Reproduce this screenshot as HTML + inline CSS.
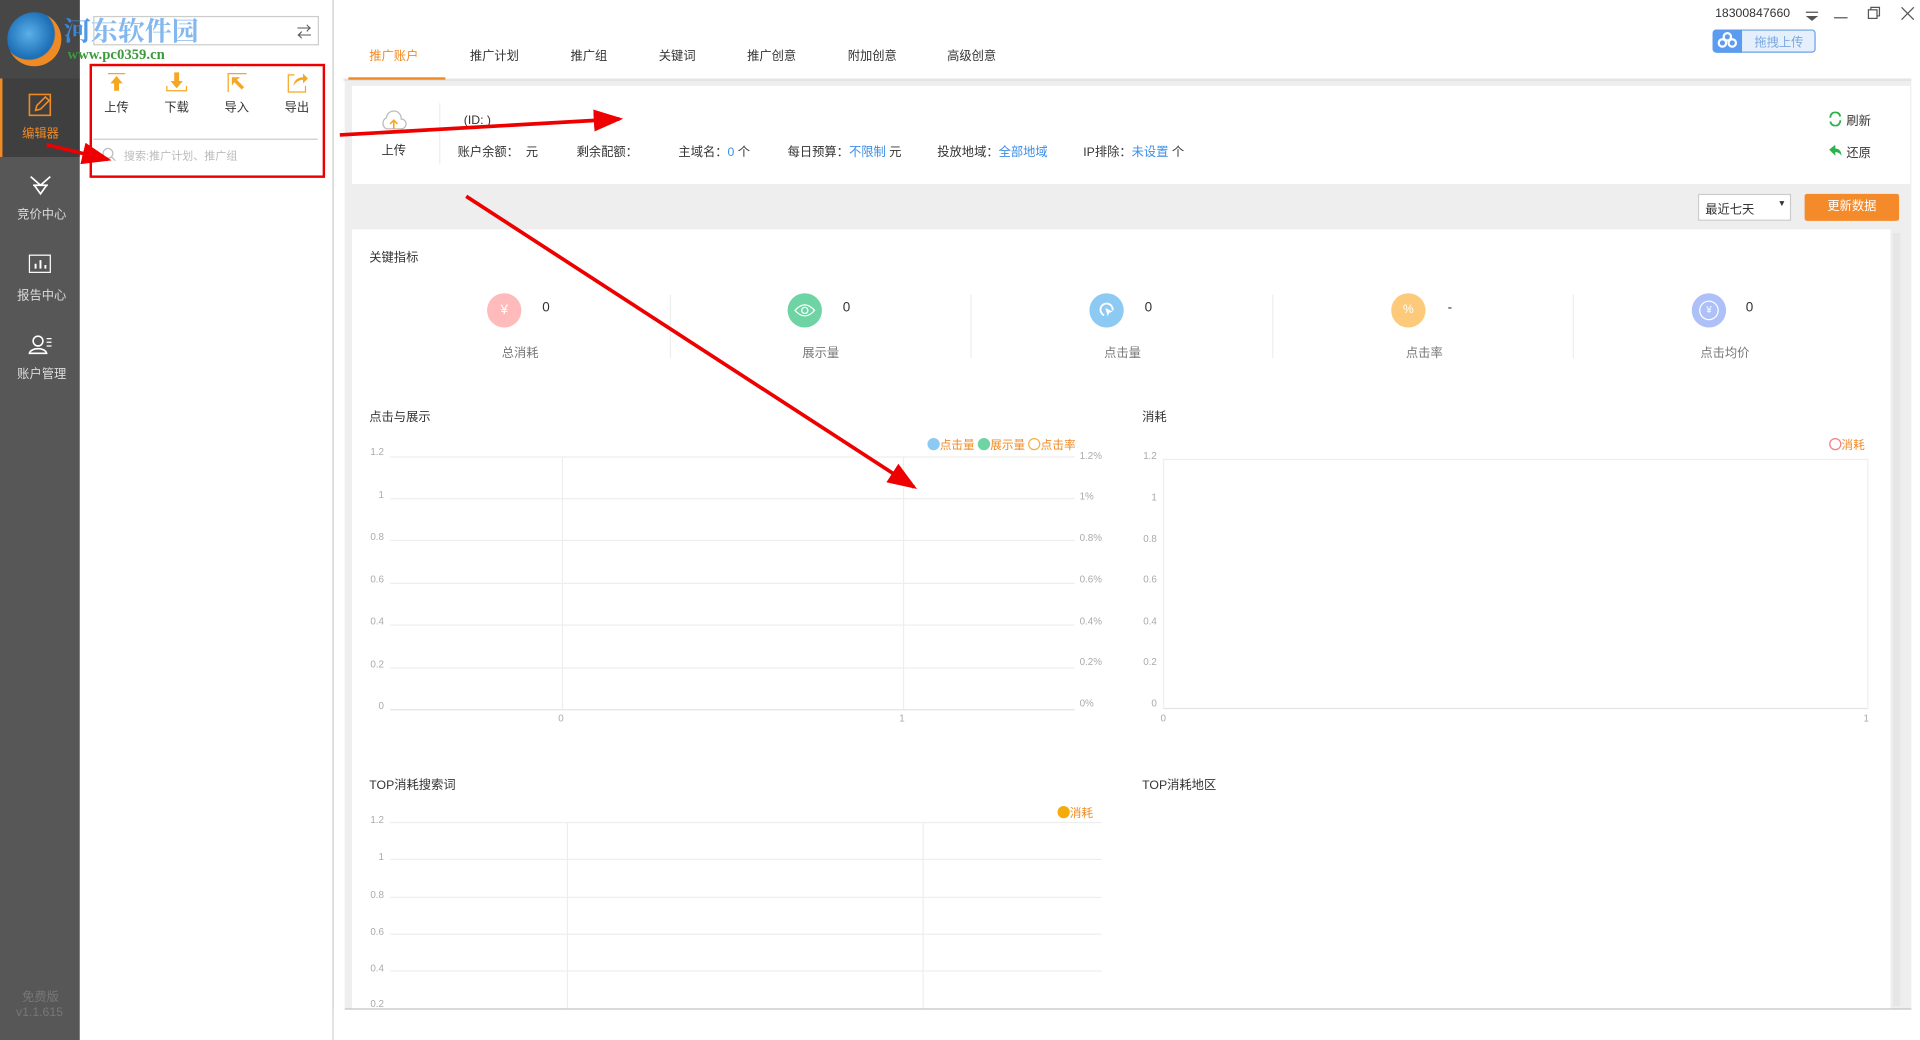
<!DOCTYPE html>
<html><head><meta charset="utf-8">
<style>
*{margin:0;padding:0;box-sizing:border-box}
html,body{width:1920px;height:1040px;overflow:hidden;background:#fff}
#w{position:absolute;left:0;top:0;width:1565px;height:848px;transform:scale(1.2268);transform-origin:0 0;font-family:"Liberation Sans","Noto Sans CJK SC",sans-serif;font-size:10px;color:#333}
.a{position:absolute;white-space:nowrap}
.g{color:#999}
.b{color:#3a8ee6}
.hl{position:absolute;height:1px;background:#eee}
.vl{position:absolute;width:1px;background:#eee}
.yl{position:absolute;font-size:8px;color:#aaa;text-align:right}
.pl{position:absolute;font-size:8px;color:#aaa;left:880px}
</style></head><body><div id="w">
<!-- sidebar -->
<div class="a" style="left:0;top:0;width:65px;height:848px;background:#575757"></div>
<div class="a" style="left:0;top:0;width:65px;height:64px;background:#474747"></div>
<div class="a" style="left:0;top:64px;width:65px;height:64px;background:#3f3f3f;border-left:2px solid #f08a24"></div>
<svg class="a" style="left:22px;top:75px" width="22" height="22" viewBox="0 0 22 22"><rect x="2" y="2" width="17" height="17" fill="none" stroke="#f08a24" stroke-width="1.3"/><path d="M7 15l1-4 7-7 3 3-7 7z" fill="none" stroke="#f08a24" stroke-width="1.3"/></svg>
<div class="a" style="left:18px;top:100px;color:#f08a24;font-size:10px">编辑器</div>
<svg class="a" style="left:23px;top:142px" width="20" height="18"><path d="M2 2l8 7 8-7M4 9h12M5 9l5 7 5-7" fill="none" stroke="#fff" stroke-width="1.4"/></svg>
<div class="a" style="left:14px;top:166px;color:#ddd">竞价中心</div>
<svg class="a" style="left:23px;top:207px" width="20" height="18"><rect x="1" y="1" width="17" height="14" fill="none" stroke="#fff"/><path d="M6 12V8M10 12V5M14 12V9" stroke="#fff" stroke-width="1.6"/></svg>
<div class="a" style="left:14px;top:232px;color:#ddd">报告中心</div>
<svg class="a" style="left:23px;top:272px" width="22" height="18"><circle cx="8" cy="6" r="4" fill="none" stroke="#fff" stroke-width="1.3"/><path d="M1 16c1-5 13-5 14 0z" fill="none" stroke="#fff" stroke-width="1.3"/><path d="M15 4h4M15 7h4M15 10h4" stroke="#fff"/></svg>
<div class="a" style="left:14px;top:296px;color:#ddd">账户管理</div>
<div class="a" style="left:18px;top:804px;color:#777">免费版</div>
<div class="a" style="left:13px;top:820px;color:#777">v1.1.615</div>
<!-- watermark logo -->
<div class="a" style="left:6px;top:10px;width:44px;height:44px;border-radius:50%;background:radial-gradient(circle at 40% 40%,#5ab0e8,#1a6cb4 55%,#f08a24 58%)"></div>
<div class="a" style="left:52px;top:9px;font-size:22px;font-weight:bold;color:#3a8ee6;font-family:'Liberation Serif','Noto Serif CJK SC',serif;opacity:.9">河东软件园</div>
<div class="a" style="left:55px;top:37px;font-size:12px;font-weight:bold;color:#3c9a3c;font-family:'Liberation Serif',serif">www.pc0359.cn</div>
<!-- left panel -->
<div class="a" style="left:271px;top:0;width:1px;height:848px;background:#ccc"></div>
<div class="a" style="left:76px;top:13px;width:184px;height:24px;border:1px solid #ccc;background:rgba(255,255,255,.3)"></div>
<div class="a" style="left:242px;top:17px;font-size:12px;color:#555">⇄</div>
<svg class="a" style="left:86px;top:58px" width="18" height="18"><path d="M2 2h14" stroke="#f5a623"/><path d="M9 4l-5 6h3v6h4v-6h3z" fill="#f5a623"/></svg>
<svg class="a" style="left:135px;top:58px" width="18" height="18"><path d="M7 1h4v7h3l-5 6-5-6h3z" fill="#f5a623"/><path d="M1 12v4h16v-4" fill="none" stroke="#f5a623"/></svg>
<svg class="a" style="left:184px;top:58px" width="18" height="18"><path d="M2 17V2h15" fill="none" stroke="#f5a623"/><path d="M5 5h7l-3 2 6 6-2 2-6-6-2 3z" fill="#f5a623"/></svg>
<svg class="a" style="left:233px;top:58px" width="18" height="18"><path d="M7 3H2v14h14v-5" fill="none" stroke="#f5a623"/><path d="M6 12c1-5 4-7 8-7V2l4 4-4 4V7c-3 0-6 2-8 5z" fill="#f5a623"/></svg>
<div class="a" style="left:85px;top:79px">上传</div>
<div class="a" style="left:134px;top:79px">下载</div>
<div class="a" style="left:183px;top:79px">导入</div>
<div class="a" style="left:232px;top:79px">导出</div>
<div class="a" style="left:76px;top:113px;width:183px;height:1px;background:#ccc"></div>
<svg class="a" style="left:83px;top:120px" width="12" height="12"><circle cx="5" cy="5" r="4" fill="none" stroke="#bbb"/><path d="M8 8l3 3" stroke="#bbb"/></svg>
<div class="a g" style="left:101px;top:120px;font-size:9px;color:#bbb">搜索:推广计划、推广组</div>
<div class="a" style="left:73px;top:52px;width:192px;height:93px;border:2px solid #e00"></div>
<!-- tabs -->
<div class="a" style="left:301px;top:37px;color:#f08a24">推广账户</div>
<div class="a" style="left:383px;top:37px">推广计划</div>
<div class="a" style="left:465px;top:37px">推广组</div>
<div class="a" style="left:537px;top:37px">关键词</div>
<div class="a" style="left:609px;top:37px">推广创意</div>
<div class="a" style="left:691px;top:37px">附加创意</div>
<div class="a" style="left:772px;top:37px">高级创意</div>
<div class="a" style="left:280px;top:64px;width:1278px;height:2px;background:#e4e4e4"></div>
<div class="a" style="left:284px;top:63px;width:79px;height:2px;background:#f08a24"></div>
<!-- top right -->
<div class="a" style="left:1398px;top:6px;font-size:10px">18300847660</div>
<svg class="a" style="left:1471px;top:9px" width="12" height="10"><path d="M1 1h10" stroke="#555"/><path d="M1 4h10l-5 4z" fill="#555"/></svg>
<div class="a" style="left:1495px;top:14px;width:11px;height:1px;background:#555"></div>
<svg class="a" style="left:1522px;top:5px" width="11" height="11"><rect x="1" y="3" width="7" height="7" fill="none" stroke="#555"/><path d="M3 3V1h7v7H8" fill="none" stroke="#555"/></svg>
<svg class="a" style="left:1549px;top:5px" width="12" height="12"><path d="M1 1l10 10M11 1L1 11" stroke="#555"/></svg>
<div class="a" style="left:1396px;top:24px;width:84px;height:19px;border:1px solid #6aa0e6;border-radius:3px;background:#e6f0fc"></div>
<div class="a" style="left:1396px;top:24px;width:24px;height:19px;border-radius:3px 0 0 3px;background:#5b9cf0"></div>
<svg class="a" style="left:1400px;top:26px" width="16" height="14"><circle cx="8" cy="4" r="3" fill="none" stroke="#fff" stroke-width="1.8"/><circle cx="4" cy="9" r="3" fill="none" stroke="#fff" stroke-width="1.8"/><circle cx="12" cy="9" r="3" fill="none" stroke="#fff" stroke-width="1.8"/></svg>
<div class="a" style="left:1430px;top:26px;color:#7aa8e0">拖拽上传</div>
<!-- gray bg -->
<div class="a" style="left:281px;top:66px;width:1277px;height:756px;background:#eee"></div>
<!-- info card -->
<div class="a" style="left:287px;top:70px;width:1270px;height:80px;background:#fff"></div>
<svg class="a" style="left:309px;top:89px" width="24" height="20"><path d="M6 16a5 5 0 0 1 0-9 6 6 0 0 1 12 1 4 4 0 0 1 0 8z" fill="none" stroke="#bbb"/><path d="M12 16V9M9 12l3-3 3 3" stroke="#f5a623" fill="none" stroke-width="1.3"/></svg>
<div class="a" style="left:311px;top:114px">上传</div>
<div class="a" style="left:358px;top:84px;width:1px;height:50px;background:#eee"></div>
<div class="a" style="left:378px;top:93px">(ID: )</div>
<div class="a" style="left:373px;top:115px">账户余额：&nbsp;&nbsp;元</div>
<div class="a" style="left:470px;top:115px">剩余配额：</div>
<div class="a" style="left:553px;top:115px">主域名：<span class="b">0</span> 个</div>
<div class="a" style="left:642px;top:115px">每日预算：<span class="b">不限制</span> 元</div>
<div class="a" style="left:764px;top:115px">投放地域：<span class="b">全部地域</span></div>
<div class="a" style="left:883px;top:115px">IP排除：<span class="b">未设置</span> 个</div>
<svg class="a" style="left:1490px;top:91px" width="12" height="12"><path d="M2 5a4 4 0 0 1 8-1M10 7a4 4 0 0 1-8 1" fill="none" stroke="#2bb24c" stroke-width="1.5"/></svg>
<div class="a" style="left:1505px;top:90px">刷新</div>
<svg class="a" style="left:1490px;top:117px" width="12" height="12"><path d="M1 5l5-4v3c3 0 5 2 5 6-1-2-3-3-5-3v3z" fill="#2bb24c"/></svg>
<div class="a" style="left:1505px;top:116px">还原</div>
<!-- controls -->
<div class="a" style="left:1384px;top:158px;width:76px;height:22px;border:1px solid #ccc;background:#fff;padding:3px 5px">最近七天</div>
<div class="a" style="left:1449px;top:163px;font-size:7px">▼</div>
<div class="a" style="left:1471px;top:158px;width:77px;height:22px;background:#f58a2a;border-radius:2px;color:#fff;text-align:center;line-height:21px">更新数据</div>
<!-- content -->
<div class="a" style="left:287px;top:187px;width:1254px;height:635px;background:#fff"></div>
<div class="a" style="left:1543px;top:190px;width:6px;height:630px;background:#e6e6e6"></div>
<div class="a" style="left:301px;top:201px">关键指标</div>
<div class="a" style="left:397px;top:239px;width:28px;height:28px;border-radius:50%;background:#fbb;color:#fff;text-align:center;line-height:28px;font-size:11px">¥</div>
<div class="a" style="left:642px;top:239px;width:28px;height:28px;border-radius:50%;background:#6ed4a4"></div>
<svg class="a" style="left:647px;top:246px" width="18" height="14"><path d="M1 7q8-9 16 0-8 9-16 0z" fill="none" stroke="#fff"/><circle cx="9" cy="7" r="2.5" fill="none" stroke="#fff"/></svg>
<div class="a" style="left:888px;top:239px;width:28px;height:28px;border-radius:50%;background:#8ccaf4"></div>
<svg class="a" style="left:894px;top:245px" width="16" height="16"><path d="M6 12a5 5 0 1 1 7-4" fill="none" stroke="#fff" stroke-width="1.5"/><path d="M7 6l6 3-3 1-1 3z" fill="#fff"/></svg>
<div class="a" style="left:1134px;top:239px;width:28px;height:28px;border-radius:50%;background:#fdc97a;color:#fff;text-align:center;line-height:28px">%</div>
<div class="a" style="left:1379px;top:239px;width:28px;height:28px;border-radius:50%;background:#adc0f8"></div>
<div class="a" style="left:1385px;top:245px;width:16px;height:16px;border-radius:50%;border:1.5px solid #fff;color:#fff;font-size:8px;text-align:center;line-height:13px">¥</div>
<div class="a" style="left:442px;top:245px;font-size:11px">0</div>
<div class="a" style="left:687px;top:245px;font-size:11px">0</div>
<div class="a" style="left:933px;top:245px;font-size:11px">0</div>
<div class="a" style="left:1180px;top:245px;font-size:11px">-</div>
<div class="a" style="left:1423px;top:245px;font-size:11px">0</div>
<div class="a g" style="left:409px;top:279px;color:#777">总消耗</div>
<div class="a g" style="left:654px;top:279px;color:#777">展示量</div>
<div class="a g" style="left:900px;top:279px;color:#777">点击量</div>
<div class="a g" style="left:1146px;top:279px;color:#777">点击率</div>
<div class="a g" style="left:1386px;top:279px;color:#777">点击均价</div>
<div class="vl" style="left:546px;top:240px;height:52px"></div>
<div class="vl" style="left:791px;top:240px;height:52px"></div>
<div class="vl" style="left:1037px;top:240px;height:52px"></div>
<div class="vl" style="left:1282px;top:240px;height:52px"></div>
<!-- chart 1 -->
<div class="a" style="left:301px;top:331px">点击与展示</div>
<div class="a" style="left:756px;top:355px;font-size:9.5px;color:#f08a24"><span style="display:inline-block;width:10px;height:10px;border-radius:50%;background:#8ccaf4;vertical-align:-1px"></span>点击量 <span style="display:inline-block;width:10px;height:10px;border-radius:50%;background:#6ed4a4;vertical-align:-1px"></span>展示量 <span style="display:inline-block;width:10px;height:10px;border-radius:50%;border:1.5px solid #f5b040;vertical-align:-1px"></span>点击率</div>
<div class="yl" style="left:295px;top:364px;width:18px">1.2</div>
<div class="yl" style="left:295px;top:399px;width:18px">1</div>
<div class="yl" style="left:295px;top:433px;width:18px">0.8</div>
<div class="yl" style="left:295px;top:468px;width:18px">0.6</div>
<div class="yl" style="left:295px;top:502px;width:18px">0.4</div>
<div class="yl" style="left:295px;top:537px;width:18px">0.2</div>
<div class="yl" style="left:295px;top:571px;width:18px">0</div>
<div class="pl" style="top:367px">1.2%</div>
<div class="pl" style="top:400px">1%</div>
<div class="pl" style="top:434px">0.8%</div>
<div class="pl" style="top:468px">0.6%</div>
<div class="pl" style="top:502px">0.4%</div>
<div class="pl" style="top:535px">0.2%</div>
<div class="pl" style="top:569px">0%</div>
<div class="hl" style="left:318px;top:372px;width:558px"></div>
<div class="hl" style="left:318px;top:406px;width:558px"></div>
<div class="hl" style="left:318px;top:440px;width:558px"></div>
<div class="hl" style="left:318px;top:475px;width:558px"></div>
<div class="hl" style="left:318px;top:509px;width:558px"></div>
<div class="hl" style="left:318px;top:544px;width:558px"></div>
<div class="hl" style="left:318px;top:578px;width:558px;background:#e4e4e4"></div>
<div class="vl" style="left:458px;top:372px;height:206px"></div>
<div class="vl" style="left:736px;top:372px;height:206px"></div>
<div class="yl" style="left:455px;top:581px">0</div>
<div class="yl" style="left:733px;top:581px">1</div>
<!-- chart 2 -->
<div class="a" style="left:931px;top:331px">消耗</div>
<div class="a" style="left:1491px;top:355px;font-size:9.5px;color:#f08a24"><span style="display:inline-block;width:10px;height:10px;border-radius:50%;border:1.5px solid #f08080;vertical-align:-1px"></span>消耗</div>
<div class="yl" style="left:925px;top:367px;width:18px">1.2</div>
<div class="yl" style="left:925px;top:401px;width:18px">1</div>
<div class="yl" style="left:925px;top:435px;width:18px">0.8</div>
<div class="yl" style="left:925px;top:468px;width:18px">0.6</div>
<div class="yl" style="left:925px;top:502px;width:18px">0.4</div>
<div class="yl" style="left:925px;top:535px;width:18px">0.2</div>
<div class="yl" style="left:925px;top:569px;width:18px">0</div>
<div class="hl" style="left:948px;top:374px;width:575px"></div>
<div class="hl" style="left:948px;top:577px;width:575px;background:#e4e4e4"></div>
<div class="vl" style="left:948px;top:374px;height:204px"></div>
<div class="vl" style="left:1522px;top:374px;height:204px"></div>
<div class="yl" style="left:946px;top:581px">0</div>
<div class="yl" style="left:1519px;top:581px">1</div>
<!-- chart 3 -->
<div class="a" style="left:301px;top:631px">TOP消耗搜索词</div>
<div class="a" style="left:862px;top:655px;font-size:9.5px;color:#f08a24"><span style="display:inline-block;width:10px;height:10px;border-radius:50%;background:#f5ac0a;vertical-align:-1px"></span>消耗</div>
<div class="yl" style="left:295px;top:664px;width:18px">1.2</div>
<div class="yl" style="left:295px;top:694px;width:18px">1</div>
<div class="yl" style="left:295px;top:725px;width:18px">0.8</div>
<div class="yl" style="left:295px;top:755px;width:18px">0.6</div>
<div class="yl" style="left:295px;top:785px;width:18px">0.4</div>
<div class="yl" style="left:295px;top:814px;width:18px">0.2</div>
<div class="hl" style="left:318px;top:670px;width:580px"></div>
<div class="hl" style="left:318px;top:700px;width:580px"></div>
<div class="hl" style="left:318px;top:731px;width:580px"></div>
<div class="hl" style="left:318px;top:761px;width:580px"></div>
<div class="hl" style="left:318px;top:791px;width:580px"></div>
<div class="vl" style="left:462px;top:670px;height:152px"></div>
<div class="vl" style="left:752px;top:670px;height:152px"></div>
<div class="a" style="left:931px;top:631px">TOP消耗地区</div>
<div class="a" style="left:281px;top:822px;width:1277px;height:1px;background:#bbb"></div>
<div class="a" style="left:272px;top:823px;width:1293px;height:25px;background:#fff"></div>
<!-- red arrows -->
<svg class="a" style="left:0;top:0" width="1565" height="848">
<defs><marker id="m" markerWidth="8" markerHeight="6" refX="7" refY="3" orient="auto" markerUnits="strokeWidth"><path d="M0 0L8 3L0 6z" fill="#e00"/></marker></defs>
<g stroke="#e00" stroke-width="3" fill="none" marker-end="url(#m)">
<line x1="277" y1="110" x2="505" y2="97"/>
<line x1="38" y1="118" x2="88" y2="130"/>
<line x1="380" y1="160" x2="745" y2="397"/>
</g></svg>
</div></body></html>
